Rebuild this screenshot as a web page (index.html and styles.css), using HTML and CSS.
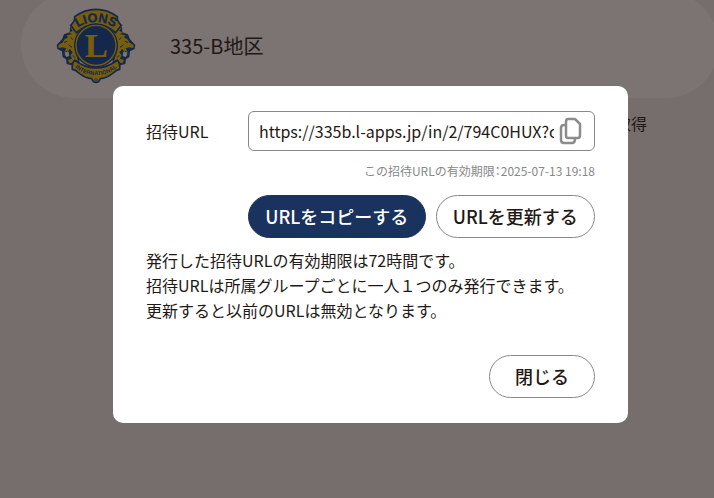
FILE: index.html
```
<!DOCTYPE html>
<html lang="ja">
<head>
    <meta charset="UTF-8">
    <meta name="viewport" content="width=device-width, initial-scale=1.0">
    <title>335-B地区</title>
    <link rel="stylesheet" href="styles.css">
</head>
<body>

<header class="header">
    <svg class="logo" viewBox="0 3 270 252" role="img" aria-label="Lions International">
        <defs>
            <path id="arc-top" d="M66 93 A95 95 0 0 1 210 93"/>
            <path id="arc-bottom" d="M66 187 A95 95 0 0 0 210 187"/>
        </defs>
        <!-- lion heads -->
        <g id="lion">
            <path class="blue" d="M78 60 L60 76 L59 91 L42 97 L36 112 L20 129 L22 141 L36 148 L38 166 L48 172 L50 186 L64 190 L88 186 L92 70 Z"/>
            <path class="gold" d="M77 68 L62 77 L68 86 L58 92 L66 97 L50 100 L54 106 L42 113 L39 121 L25 130 L26 138 L39 136 L49 139 L45 146 L54 150 L58 140 L68 150 L62 160 L66 170 L54 174 L58 184 L84 178 L76 150 L72 128 L78 104 L90 84 Z"/>
            <path class="line" d="M42 121 L52 118 M62 106 L68 113 M56 129 L66 136 M68 160 L75 166"/>
            <path class="teeth" d="M44 148 L50 151 L56 149 L58 162 L49 165 L45 160 Z"/>
        </g>
        <use href="#lion" transform="matrix(-1 0 0 1 276 0)"/>
        <!-- upper and lower ribbons -->
        <path class="ribbon" d="M62 70 Q76 57 74 44 Q104 22 138 22 Q172 22 202 44 Q200 57 214 70 L197 92 Q170 68 138 68 Q106 68 79 92 Z"/>
        <path class="ribbon" d="M74 174 Q103 198 138 198 Q173 198 202 174 Q211 185 209 202 Q198 203 191 212 Q170 229 151 230 Q147 241 138 241 Q129 241 125 230 Q106 229 85 212 Q78 203 67 202 Q65 185 74 174 Z"/>
        <circle class="blue" cx="138" cy="130" r="66"/>
        <circle class="ring" cx="138" cy="130" r="60"/>
        <text class="logo-top" text-anchor="middle"><textPath href="#arc-top" startOffset="50%">LIONS</textPath></text>
        <text class="logo-bottom" text-anchor="middle"><textPath href="#arc-bottom" startOffset="50%">INTERNATIONAL</textPath></text>
        <text class="logo-letter" x="139" y="164" text-anchor="middle">L</text>
        <circle class="mark" cx="138" cy="234" r="4"/>
    </svg>
    <h1>335-B地区</h1>
</header>

<main class="page">
    <p class="page-text">招待URL取得</p>
</main>

<div class="overlay">
    <div class="modal" role="dialog" aria-modal="true" aria-label="招待URL">
        <div class="form">
            <label class="form-label" for="invite-url">招待URL</label>
            <div class="field">
                <input type="text" id="invite-url" value="https://335b.l-apps.jp/in/2/794C0HUX?c=335b" readonly>
                <button type="button" class="copy-icon" aria-label="コピー" onclick="copyUrl()">
                    <svg viewBox="0 0 22 26" width="22" height="26">
                        <path d="M8 1 H15 L20 6 V17 Q20 20 18 20 H8 Q6 20 6 18 V4 Q6 1 8 1 Z"/>
                        <path d="M6 7 H4 Q1 7 1 10 V22 Q1 25 4 25 H12 Q15 25 15 21"/>
                    </svg>
                </button>
            </div>
            <p class="limit">この招待URLの有効期限<span class="colon">：</span>2025-07-13 19:18</p>
            <div class="buttons">
                <button type="button" class="btn btn-primary" onclick="copyUrl()">URLをコピーする</button>
                <button type="button" class="btn">URLを更新する</button>
            </div>
        </div>
        <p class="note">
            発行した招待URLの有効期限は72時間です。<br>
            招待URLは所属グループごとに一人１つのみ発行できます。<br>
            更新すると以前のURLは無効となります。
        </p>
        <div class="modal-footer">
            <button type="button" class="btn btn-close">閉じる</button>
        </div>
    </div>
</div>

<script>
    function copyUrl() {
        navigator.clipboard.writeText(document.getElementById('invite-url').value);
    }
</script>

</body>
</html>
```
FILE: styles.css
```
* {
    box-sizing: border-box;
}
body {
    background-color: #f0efee;
    color: #231815;
    font-family: "Noto Sans CJK JP", sans-serif;
    font-size: 16px;
    margin: 0;
    overflow: hidden;
}
h1, p {
    margin: 0;
}
.header {
    display: flex;
    align-items: center;
    gap: 30px;
    height: 106px;
    margin: -8px -5px 0 21px;
    padding: 0 29px;
    background-color: white;
    border-radius: 53px;
}
.header h1 {
    font-size: 20px;
    font-weight: 400;
}
.logo {
    width: 90px;
    height: 84px;
}
.logo .blue {
    fill: #00409b;
}
.logo .gold {
    fill: #f5c800;
}
.logo .line {
    fill: none;
    stroke: #00409b;
    stroke-width: 3;
}
.logo .teeth {
    fill: white;
}
.logo .ribbon {
    fill: #f5c800;
    stroke: #00409b;
    stroke-width: 5;
}
.logo .ring {
    fill: #00409b;
    stroke: #f5c800;
    stroke-width: 4;
}
.logo .mark {
    fill: none;
    stroke: #00409b;
    stroke-width: 2;
}
.logo-top {
    fill: #00409b;
    stroke: #00409b;
    stroke-width: 1;
    font-family: "Liberation Sans", sans-serif;
    font-size: 38px;
    font-weight: 700;
}
.logo-bottom {
    fill: #00409b;
    font-family: "Liberation Sans", sans-serif;
    font-size: 17px;
    font-weight: 700;
}
.logo-letter {
    fill: #f5c800;
    font-family: "Liberation Serif", serif;
    font-size: 104px;
    font-weight: 700;
}
.page {
    padding: 13px 67px;
}
.page-text {
    text-align: right;
}
.overlay {
    position: fixed;
    top: 0;
    left: 0;
    width: 100%;
    height: 100%;
    padding: 86px 86px 0 113px;
    background: rgba(35, 24, 21, 0.6);
}
.modal {
    padding: 25px 33px;
    background-color: white;
    border-radius: 10px;
}
.form {
    display: grid;
    grid-template-columns: 102px 1fr;
    align-items: center;
}
.field {
    display: flex;
    align-items: center;
    height: 40px;
    padding: 0 10px;
    border: 1px solid #888;
    border-radius: 6px;
}
.field input {
    flex: 1;
    min-width: 0;
    padding: 0;
    border: none;
    outline: none;
    background: none;
    color: inherit;
    font: inherit;
}
.copy-icon {
    display: flex;
    padding: 0 2px 0 6px;
    border: none;
    background: none;
    cursor: pointer;
}
.copy-icon svg {
    overflow: visible;
}
.copy-icon path {
    fill: none;
    stroke: #8c8c8c;
    stroke-width: 2.5;
    stroke-linejoin: round;
}
.limit {
    grid-column: 2;
    margin: 11px 0 15px;
    color: #888;
    font-size: 12px;
    line-height: 18px;
    text-align: right;
}
.colon {
    font-feature-settings: "halt";
}
.buttons {
    grid-column: 2;
    display: flex;
    gap: 10px;
}
.buttons .btn {
    flex: auto;
}
.btn {
    height: 43px;
    padding: 0 16px 2px;
    border: 1px solid #888;
    border-radius: 22px;
    background-color: white;
    color: #231815;
    font-family: inherit;
    font-size: 18px;
    font-weight: 500;
    white-space: nowrap;
    cursor: pointer;
}
.btn-primary {
    border-color: #1a325e;
    background-color: #1a325e;
    color: white;
}
.btn-close {
    padding: 0 25px 2px;
}
.note {
    margin-top: 10px;
    line-height: 25px;
}
.modal-footer {
    display: flex;
    justify-content: flex-end;
    margin-top: 32px;
}
```
